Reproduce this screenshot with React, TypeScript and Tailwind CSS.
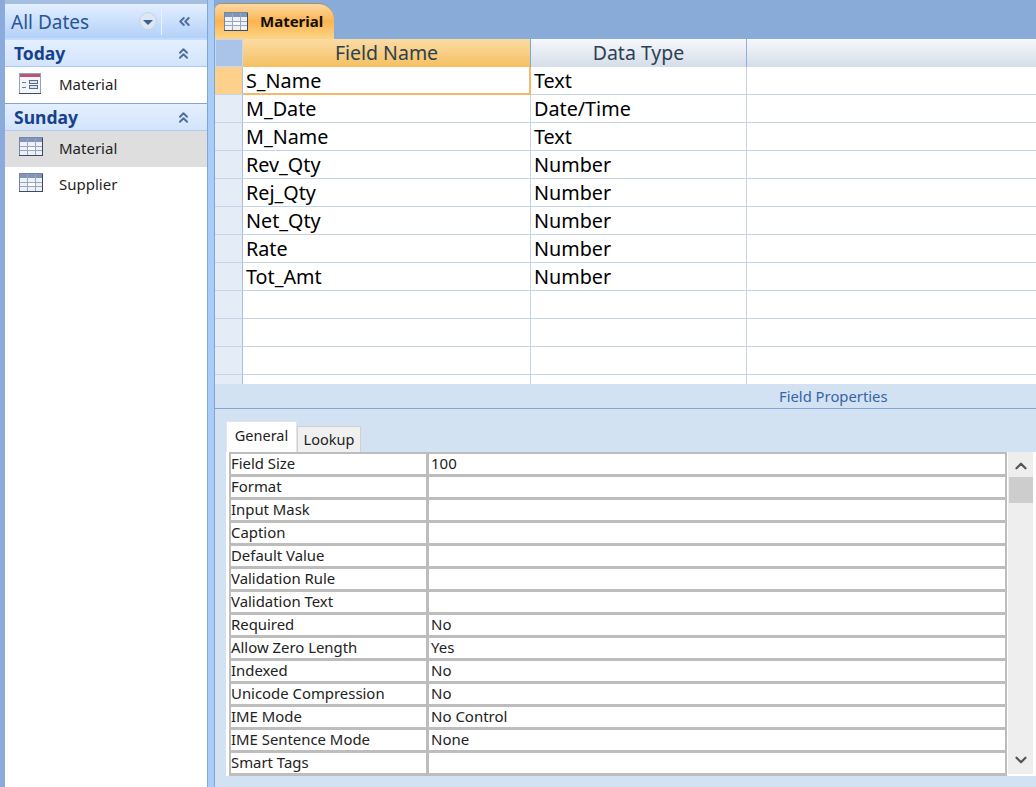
import { ChevronDown, ChevronUp, ChevronsLeft, ChevronsUp } from "lucide-react";

const fields = [
  ["S_Name", "Text"],
  ["M_Date", "Date/Time"],
  ["M_Name", "Text"],
  ["Rev_Qty", "Number"],
  ["Rej_Qty", "Number"],
  ["Net_Qty", "Number"],
  ["Rate", "Number"],
  ["Tot_Amt", "Number"],
  ["", ""],
  ["", ""],
  ["", ""],
  ["", ""],
];

const props = [
  ["Field Size", "100"],
  ["Format", ""],
  ["Input Mask", ""],
  ["Caption", ""],
  ["Default Value", ""],
  ["Validation Rule", ""],
  ["Validation Text", ""],
  ["Required", "No"],
  ["Allow Zero Length", "Yes"],
  ["Indexed", "No"],
  ["Unicode Compression", "No"],
  ["IME Mode", "No Control"],
  ["IME Sentence Mode", "None"],
  ["Smart Tags", ""],
];

function TableIcon({ className }: { className?: string }) {
  return (
    <svg viewBox="0 0 24 19" className={className}>
      <rect x="0.5" y="0.5" width="23" height="18" fill="#eef1f7" stroke="#7486a6" />
      <rect x="1" y="1" width="22" height="4" fill="#8295b8" />
      <rect x="9" y="10" width="7" height="3" fill="#ffffff" />
      <path d="M1 9.5h22M1 13.5h22M8.5 1v17M16.5 1v17" stroke="#97a6c0" strokeWidth="1" />
      <path d="M0 18.5h24M23.5 1v18" stroke="#3d4a60" strokeWidth="1" />
    </svg>
  );
}

function FormIcon({ className }: { className?: string }) {
  return (
    <svg viewBox="0 0 22 21" className={className}>
      <rect x="0.5" y="0.5" width="21" height="20" fill="#f4f5f9" stroke="#9aa1b2" />
      <rect x="1" y="1" width="20" height="3" fill="#b8567a" />
      <path d="M3 9.5h4M3 14.5h4" stroke="#6d7f9c" strokeWidth="1" />
      <rect x="10.5" y="7.5" width="8" height="3" fill="#dfe5f0" stroke="#5b6b88" strokeWidth="1" />
      <rect x="10.5" y="12.5" width="8" height="3" fill="#dfe5f0" stroke="#5b6b88" strokeWidth="1" />
      <path d="M0 20.5h22" stroke="#3d4a60" strokeWidth="1" />
    </svg>
  );
}

function GroupHeader({ label }: { label: string }) {
  return (
    <div className="flex h-[27px] shrink-0 items-center justify-between border-b border-[#a9cdf7] bg-gradient-to-b from-[#e4efff] to-[#d3e4fc] pl-[9px] pr-[15px]">
      <span className="pt-[2px] text-[17.5px] font-bold leading-none text-[#15428b]">{label}</span>
      <ChevronsUp className="size-[17px] text-[#4f6f9f]" strokeWidth={2.75} />
    </div>
  );
}

function NavItem({ label, active, form }: { label: string; active?: boolean; form?: boolean }) {
  return (
    <div className={`flex h-9 shrink-0 items-start pl-[14px] pt-[6px] ${active ? "bg-[#dedede]" : "bg-white"}`}>
      {form ? <FormIcon className="h-[21px] w-[22px]" /> : <TableIcon className="h-[19px] w-[24px]" />}
      <span className={`mt-[1px] text-[15px] leading-5 text-[#1f1f1f] ${form ? "ml-[18px]" : "ml-4"}`}>{label}</span>
    </div>
  );
}

export default function App() {
  return (
    <div className="flex h-[787px] w-[1036px] overflow-hidden bg-[#89abd8] font-['Noto_Sans',sans-serif]">
      <div className="w-[5px] shrink-0 bg-[#8aabdb]" />
      <div className="flex w-[202px] shrink-0 flex-col bg-white">
        <div className="h-[4px] shrink-0 bg-[#a5bfe2]" />
        <div className="flex h-[36px] shrink-0 items-center border-b-2 border-[#c4dcfb] bg-gradient-to-b from-[#e3efff] to-[#b3d1f8] pl-[6px]">
          <span className="w-[130px] pt-[2px] text-[19px] leading-none text-[#2a5595]">All Dates</span>
          <span className="-ml-[2px] flex size-[18px] items-center justify-center rounded-full border border-[#c3d3e8] bg-[#dde6f3]">
            <span className="mt-[2px] border-x-[5px] border-t-[5px] border-x-transparent border-t-[#3d5f90]" />
          </span>
          <span className="ml-[4px] h-[28px] w-px bg-[#e8f2ff]" />
          <ChevronsLeft className="ml-[14px] size-[17px] text-[#4f6f9f]" strokeWidth={2.75} />
        </div>
        <GroupHeader label="Today" />
        <NavItem label="Material" form />
        <div className="h-px shrink-0 bg-[#7ea6d8]" />
        <GroupHeader label="Sunday" />
        <NavItem label="Material" active />
        <NavItem label="Supplier" />
        <div className="flex-1 bg-white" />
      </div>
      <div className="w-[8px] shrink-0 border-x border-[#7ea6d8] bg-[#a9cdf7]" />

      <div className="flex min-w-0 flex-1 flex-col">
        <div className="flex h-[39px] shrink-0 items-end bg-[#89abd8]">
          <div className="flex h-[36px] w-[119px] items-center rounded-tl-[6px] rounded-tr-[16px] border-t border-[#a88e68] bg-gradient-to-b from-[#fbd9a0] via-[#fbb44e] to-[#fdd586] pl-[9px]">
            <TableIcon className="h-[19px] w-[24px]" />
            <span className="ml-3 text-[15px] font-bold text-[#111]">Material</span>
          </div>
        </div>

        <div className="h-[345px] shrink-0 overflow-hidden bg-white">
          <div className="flex h-[28px]">
            <div className="w-[28px] border border-[#c2d8f5] bg-[#a9c4e8]" />
            <div className="flex w-[288px] items-center justify-center border-r border-[#7ea6d8] bg-gradient-to-b from-[#fbdca4] to-[#f4c05f] text-[19.5px] text-[#2b4050]">
              Field Name
            </div>
            <div className="flex w-[216px] items-center justify-center border-r border-[#8eb0dc] bg-gradient-to-b from-[#f6f8fb] to-[#d6dde9] text-[19.5px] text-[#2b4050]">
              Data Type
            </div>
            <div className="flex-1 bg-gradient-to-b from-[#f6f8fb] to-[#d6dde9]" />
          </div>
          {fields.map(([name, type], i) => (
            <div key={i} className="flex h-[28px] shrink-0 border-b border-[#c5d3e8] text-[19.75px] leading-[27px] text-black">
              <div className={`w-[28px] border-r border-[#a9bedc] ${i === 0 ? "bg-[#fdd08c]" : "bg-[#e4ecf7]"}`} />
              <div className={`w-[288px] border-r pl-[3px] ${i === 0 ? "-mb-px border-r-2 border-b-2 border-[#f6b868]" : "border-[#c5d3e8]"}`}>
                {name}
              </div>
              <div className="w-[216px] border-r border-[#c5d3e8] pl-[3px]">{type}</div>
              <div className="flex-1" />
            </div>
          ))}
        </div>

        <div className="flex h-[25px] shrink-0 items-center border-b border-[#7ea6d8] bg-[#d3e2f2] pl-[564px] text-[14.8px] text-[#3565a8]">
          <span className="whitespace-nowrap">Field Properties</span>
        </div>

        <div className="flex-1 bg-[#d3e2f2] pl-[11px] pt-[12px]">
          <div className="flex h-[31px] items-end">
            <div className="flex h-[31px] w-[71px] items-center justify-center border border-b-0 border-[#e4e4e4] bg-white pb-[3px] text-[14.5px] text-[#222]">
              General
            </div>
            <div className="flex h-[26px] w-[64px] items-center justify-center border border-b-0 border-[#d0d0d0] bg-[#f0f0f0] text-[14.5px] text-[#222]">
              Lookup
            </div>
          </div>
          <div className="flex w-[810px] bg-white pl-[3px]">
            <div className="w-[778px] border-[2.5px] border-b-[3px] border-[#bdbdbd]">
              {props.map(([label, value], i) => (
                <div key={label} className={`flex ${i > 0 ? "h-[23px] border-t-[3px] border-[#bdbdbd]" : "h-[20px]"}`}>
                  <div className="w-[198px] overflow-hidden whitespace-nowrap border-r-[3px] border-[#bdbdbd] text-[14.9px] leading-[19px] text-[#222]">
                    {label}
                  </div>
                  <div className="flex-1 pl-[2px] text-[15px] leading-[19px] text-[#222]">{value}</div>
                </div>
              ))}
            </div>
            <div className="ml-px flex h-[322px] w-[25px] flex-col items-center bg-[#eeeeee]">
              <ChevronUp className="mt-[5px] size-[18px] shrink-0 text-[#555]" strokeWidth={3} />
              <div className="mt-[2px] h-[26px] w-[24px] bg-[#cdcdcd]" />
              <div className="flex-1" />
              <ChevronDown className="mb-[5px] size-[18px] shrink-0 text-[#555]" strokeWidth={3} />
            </div>
          </div>
        </div>
      </div>
    </div>
  );
}
